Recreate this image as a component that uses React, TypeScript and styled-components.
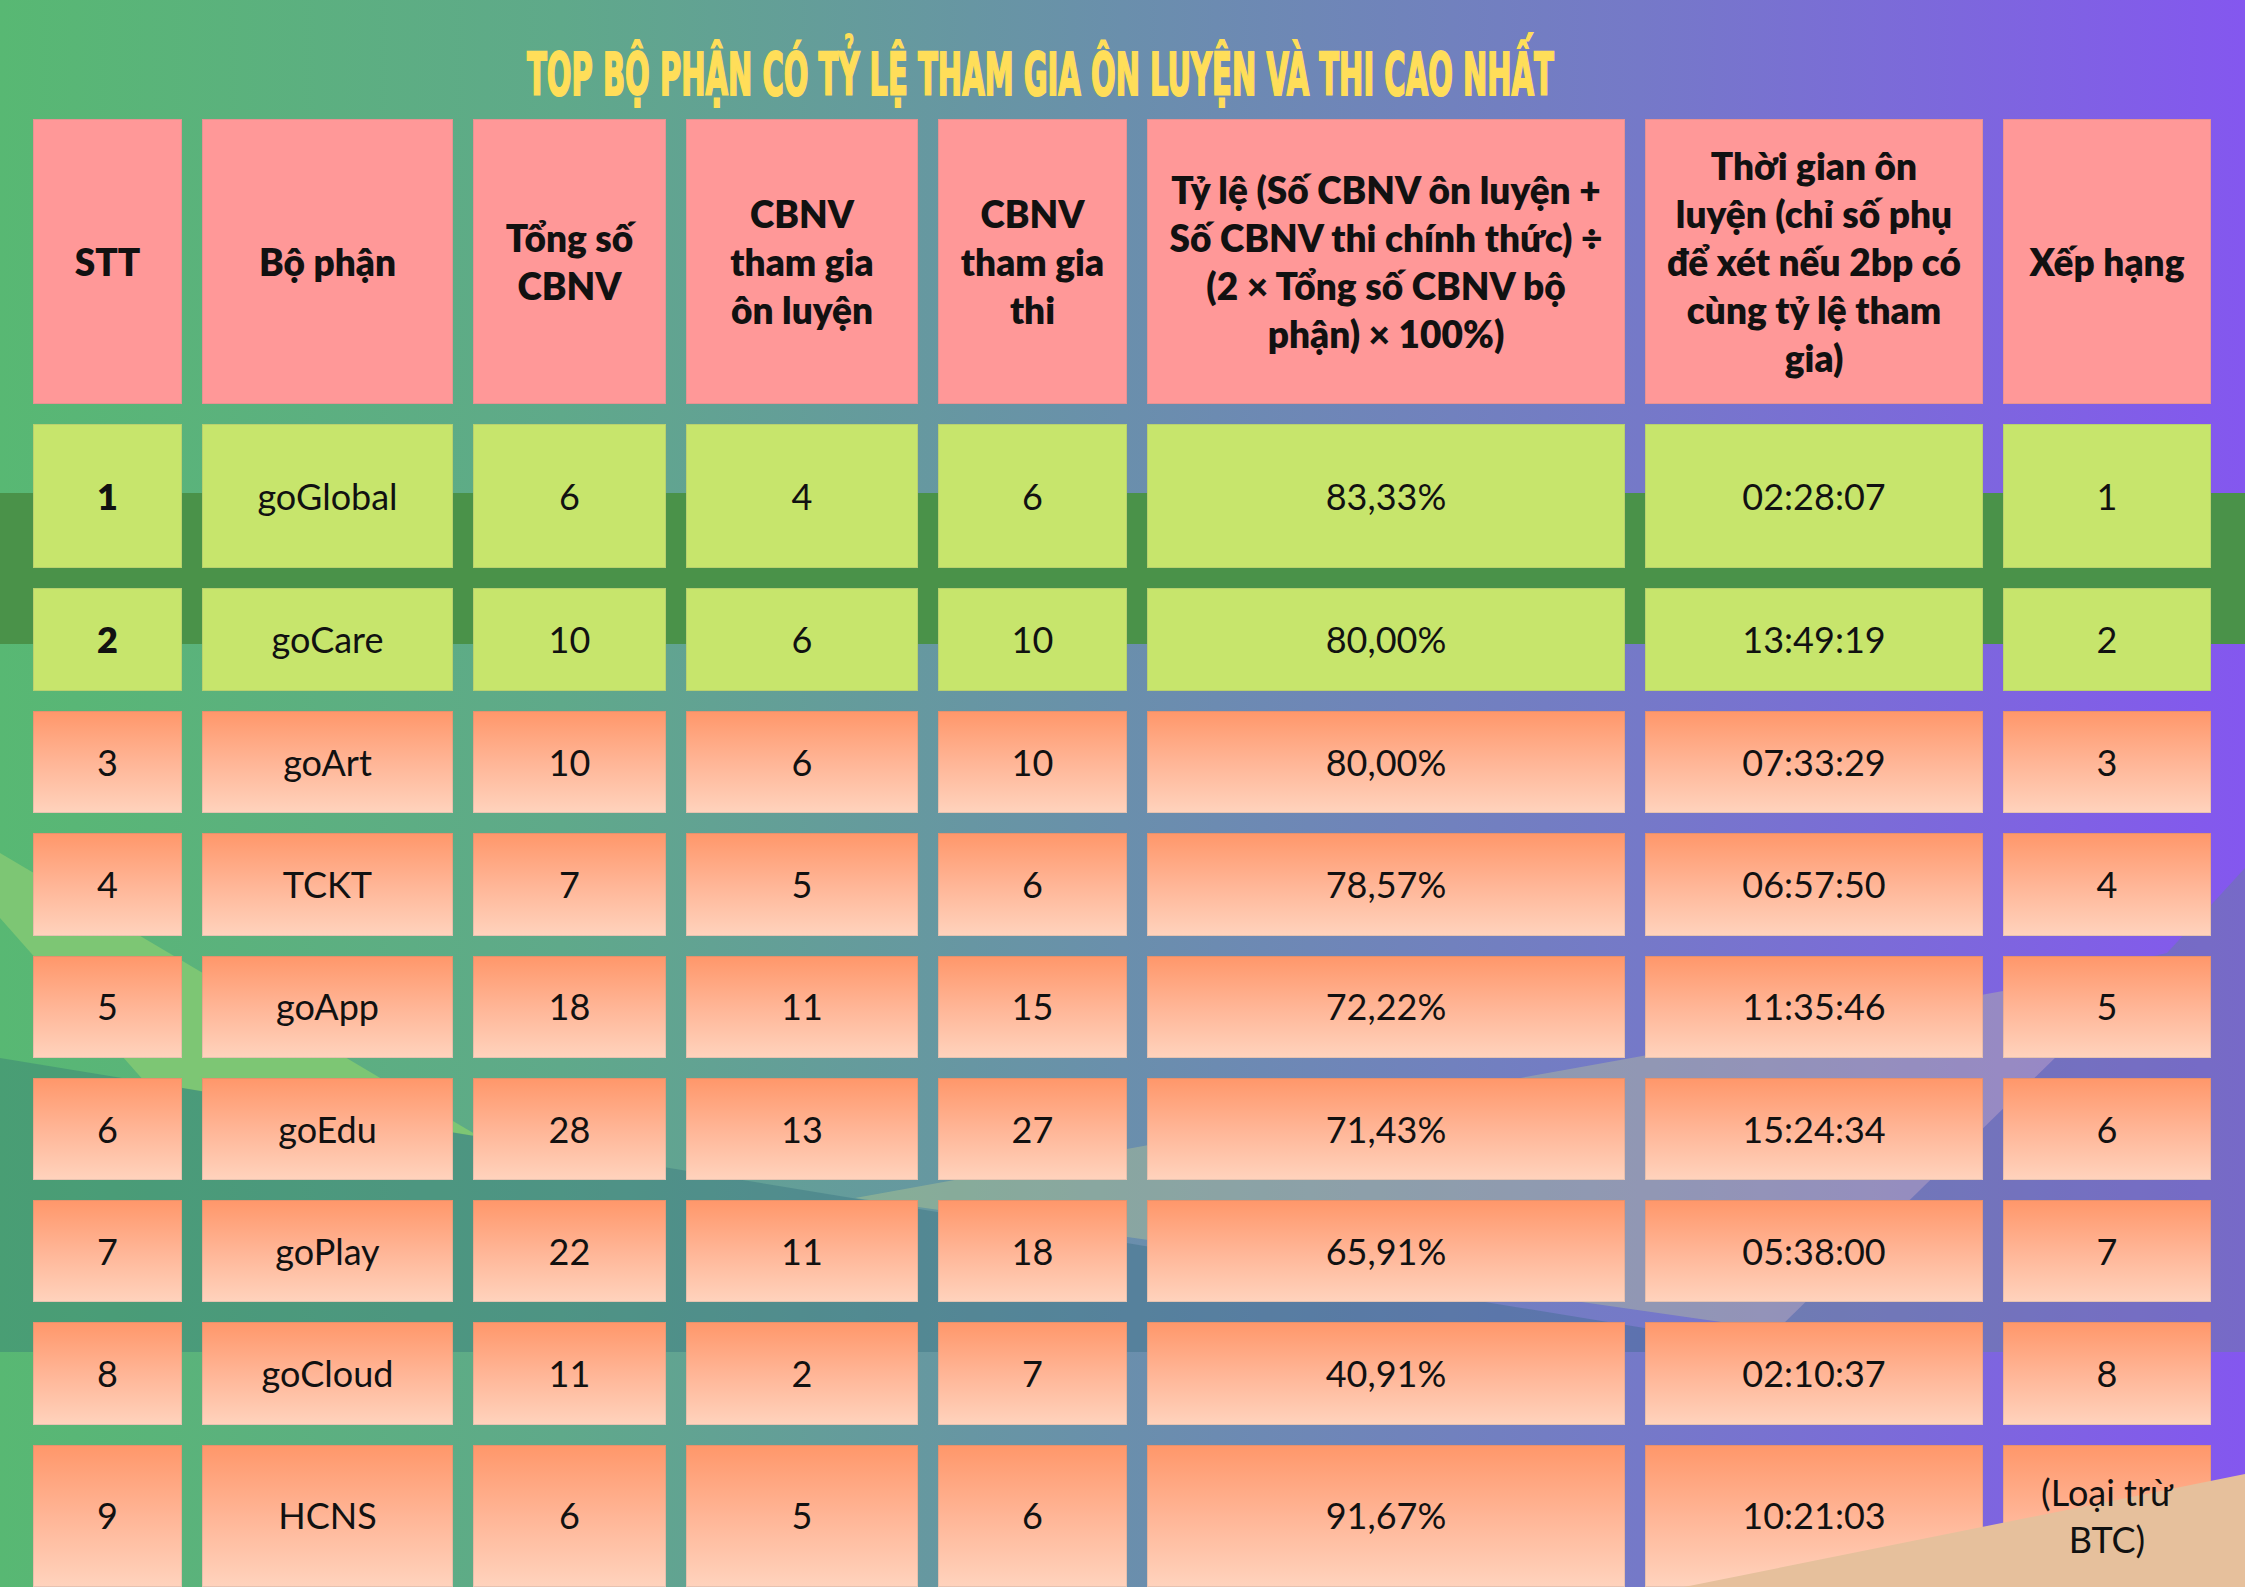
import { FC, useLayoutEffect, useRef, useState } from 'react'
import styled, { createGlobalStyle, css } from 'styled-components'

const GlobalStyle = createGlobalStyle`
  html, body {
    margin: 0;
    padding: 0;
  }
  body {
    font-family: Lato, "Noto Sans", sans-serif;
    color: #111;
  }
`

const Page = styled.div`
  position: relative;
  z-index: 0;
  width: 2245px;
  height: 1587px;
  overflow: hidden;
  background: linear-gradient(
    90deg,
    #58b873 0%,
    #5fa98a 25%,
    #6a8fac 50%,
    #7579c8 73%,
    #8457ef 100%
  );
`

const Backdrop = styled.svg`
  position: absolute;
  inset: 0;
  z-index: -1;
`

const Foreground = styled.svg`
  position: absolute;
  inset: 0;
  z-index: 1;
  pointer-events: none;
`

const Content = styled.div`
  padding: 0 33px;
`

const TitleRow = styled.div`
  height: 119px;
  box-sizing: border-box;
  padding: 46px 0 0 494px;
`

const Title = styled.h1`
  display: inline-block;
  margin: 0;
  font-family: "DejaVu Sans Condensed", "DejaVu Sans", sans-serif;
  font-weight: 700;
  font-size: 58px;
  line-height: 58px;
  color: #ffde59;
  -webkit-text-stroke: 2px #ffde59;
  white-space: nowrap;
  transform-origin: left top;
`

const Table = styled.div`
  display: grid;
  grid-template-columns: 149px 251px 193px 232px 189px 478px 338px 208px;
  grid-template-rows: 285px 144px 103px repeat(6, 102.3px) 142px;
  column-gap: 20px;
  row-gap: 20px;
`

type Tone = 'head' | 'lime' | 'peach'

const toneStyle = {
  head: css`
    background: #ff9898;
    font-weight: 800;
    font-size: 37px;
    line-height: 48px;
  `,
  lime: css`
    background: #c7e56c;
    font-size: 36px;
    line-height: 47px;
  `,
  peach: css`
    background: linear-gradient(180deg, #ff976a 0%, #ffb596 50%, #ffd3bd 100%);
    font-size: 36px;
    line-height: 47px;
  `,
}

const Cell = styled.div<{ $tone: Tone; $strong?: boolean }>`
  display: flex;
  align-items: center;
  justify-content: center;
  text-align: center;
  box-sizing: border-box;
  box-shadow: inset 0 0 0 1px rgba(120, 120, 120, 0.18);
  ${({ $tone }) => toneStyle[$tone]}
  ${({ $strong }) => $strong && 'font-weight: 800;'}
`

const CellText = styled.span`
  position: relative;
  z-index: 2;
  white-space: pre-line;
`

const headers = [
  'STT',
  'Bộ phận',
  'Tổng số\nCBNV',
  'CBNV\ntham gia\nôn luyện',
  'CBNV\ntham gia\nthi',
  'Tỷ lệ (Số CBNV ôn luyện +\nSố CBNV thi chính thức) ÷\n(2 × Tổng số CBNV bộ\nphận) × 100%)',
  'Thời gian ôn\nluyện (chỉ số phụ\nđể xét nếu 2bp có\ncùng tỷ lệ tham\ngia)',
  'Xếp hạng',
]

const rows = [
  ['1', 'goGlobal', '6', '4', '6', '83,33%', '02:28:07', '1'],
  ['2', 'goCare', '10', '6', '10', '80,00%', '13:49:19', '2'],
  ['3', 'goArt', '10', '6', '10', '80,00%', '07:33:29', '3'],
  ['4', 'TCKT', '7', '5', '6', '78,57%', '06:57:50', '4'],
  ['5', 'goApp', '18', '11', '15', '72,22%', '11:35:46', '5'],
  ['6', 'goEdu', '28', '13', '27', '71,43%', '15:24:34', '6'],
  ['7', 'goPlay', '22', '11', '18', '65,91%', '05:38:00', '7'],
  ['8', 'goCloud', '11', '2', '7', '40,91%', '02:10:37', '8'],
  ['9', 'HCNS', '6', '5', '6', '91,67%', '10:21:03', '(Loại trừ\nBTC)'],
]

const TITLE_WIDTH = 1027

const FitTitle: FC<{ text: string }> = ({ text }) => {
  const ref = useRef<HTMLHeadingElement>(null)
  const [scale, setScale] = useState(0.56)

  useLayoutEffect(() => {
    const measure = () => {
      if (ref.current) setScale(TITLE_WIDTH / ref.current.offsetWidth)
    }
    measure()
    document.fonts?.ready.then(measure)
  }, [text])

  return (
    <Title ref={ref} style={{ transform: `scaleX(${scale})` }}>
      {text}
    </Title>
  )
}

const App: FC = () => {
  return (
    <Page>
      <GlobalStyle />
      <Backdrop width="2245" height="1587" viewBox="0 0 2245 1587">
        <rect x="0" y="493" width="2245" height="151" fill="#4a9249" />
        <polygon points="0,853 480,1137 145,1082 0,918" fill="#7dc674" />
        <polygon points="0,1058 1790,1352 0,1352" fill="rgba(40,100,120,0.3)" />
        <polygon points="855,1198 2003,991 2056,1057 1777,1330" fill="rgba(200,210,140,0.34)" />
        <polygon
          points="2003,991 2167,953 2245,868 2245,1352 1790,1352 1777,1330 2056,1057"
          fill="rgba(90,150,110,0.3)"
        />
      </Backdrop>
      <Foreground width="2245" height="1587" viewBox="0 0 2245 1587">
        <polygon points="1684,1587 2245,1474 2245,1587" fill="#e6c09c" />
      </Foreground>
      <Content>
        <TitleRow>
          <FitTitle text="TOP BỘ PHẬN CÓ TỶ LỆ THAM GIA ÔN LUYỆN VÀ THI CAO NHẤT" />
        </TitleRow>
        <Table>
          {headers.map((h, i) => (
            <Cell key={`h${i}`} $tone="head">
              <CellText>{h}</CellText>
            </Cell>
          ))}
          {rows.map((row, r) =>
            row.map((value, c) => (
              <Cell
                key={`${r}-${c}`}
                $tone={r < 2 ? 'lime' : 'peach'}
                $strong={r < 2 && c === 0}
              >
                <CellText>{value}</CellText>
              </Cell>
            ))
          )}
        </Table>
      </Content>
    </Page>
  )
}

export default App
